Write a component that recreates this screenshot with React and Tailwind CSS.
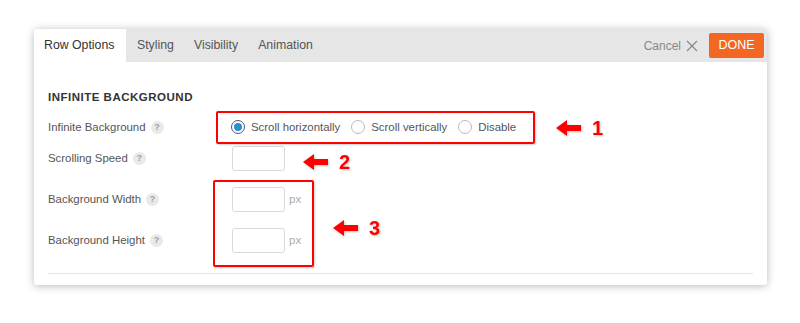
import React from "react";

const HelpIcon = () => (
  <span className="ml-[5px] inline-flex h-[13px] w-[13px] items-center justify-center rounded-full bg-[#e9e9e9] text-[9px] font-bold leading-none text-[#a0a0a0]">
    ?
  </span>
);

const Radio = ({ checked, label }) => (
  <label className="flex items-center gap-[6px]">
    <span
      className={`flex h-[14px] w-[14px] items-center justify-center rounded-full border ${
        checked ? "border-[#555]" : "border-[#bbb]"
      } bg-white`}
    >
      {checked && <span className="h-[8px] w-[8px] rounded-full bg-[#2b8fd6]" />}
    </span>
    <span>{label}</span>
  </label>
);

const Arrow = ({ num }) => (
  <div className="flex items-center gap-[11px] drop-shadow-[1px_1px_1px_rgba(0,0,0,0.25)]">
    <svg width="25" height="16" viewBox="0 0 25 16">
      <path d="M0 8 L11 0 L11 5 L25 5 L25 11 L11 11 L11 16 Z" fill="#f00" />
    </svg>
    <span className="text-[20px] font-bold leading-none text-[#f00]">{num}</span>
  </div>
);

const Field = ({ suffix }) => (
  <div className="flex items-center">
    <div className="h-[25px] w-[53px] rounded-[3px] border border-[#d9d9d9] bg-white" />
    {suffix && <span className="ml-[4px] text-[11.5px] text-[#aaa]">{suffix}</span>}
  </div>
);

const Label = ({ children }) => (
  <div className="flex w-[184px] items-center text-[11.4px] text-[#555]">
    {children}
    <HelpIcon />
  </div>
);

export default function App() {
  return (
    <div className="relative h-[323px] w-[800px] bg-white font-['Liberation_Sans',Arial,sans-serif]">
      <div className="absolute left-[34px] top-[29px] h-[256px] w-[733px] overflow-hidden rounded-[3px] bg-white shadow-[0_1px_8px_rgba(0,0,0,0.28)]">
        {/* header tabs */}
        <div className="flex h-[33px] items-stretch bg-[#e6e6e6] text-[12.3px] text-[#555]">
          <div className="flex w-[92px] items-center bg-white pl-[10px] text-[#333]">Row Options</div>
          <div className="flex items-center pl-[11px] pr-[10px]">Styling</div>
          <div className="flex items-center pl-[10px] pr-[10px]">Visibility</div>
          <div className="flex items-center pl-[10px]">Animation</div>
          <div className="ml-auto flex items-center pr-[3px]">
            <span className="text-[12px] text-[#888]">Cancel</span>
            <svg className="ml-[5px]" width="12" height="12" viewBox="0 0 12 12">
              <path d="M1 1 L11 11 M11 1 L1 11" stroke="#888" strokeWidth="1.2" />
            </svg>
            <button className="ml-[11px] h-[25px] w-[55px] rounded-[2px] bg-[#f26722] text-[12.5px] text-white">
              DONE
            </button>
          </div>
        </div>

        {/* body */}
        <div className="px-[14px]">
          <div className="mt-[27px] text-[11.5px] font-bold tracking-[0.5px] text-[#333]">INFINITE BACKGROUND</div>

          <div className="mt-[12px] flex h-[18px] items-center">
            <Label>Infinite Background</Label>
            <div className="-ml-[1px] flex items-center gap-[11px] text-[11.4px] text-[#555]">
              <Radio checked label="Scroll horizontally" />
              <Radio label="Scroll vertically" />
              <Radio label="Disable" />
            </div>
          </div>

          <div className="mt-[10px] flex h-[25px] items-center">
            <Label>Scrolling Speed</Label>
            <Field />
          </div>

          <div className="mt-[16px] flex h-[25px] items-center">
            <Label>Background Width</Label>
            <Field suffix="px" />
          </div>

          <div className="mt-[16px] flex h-[25px] items-center">
            <Label>Background Height</Label>
            <Field suffix="px" />
          </div>

          <div className="mt-[20px] h-px bg-[#e5e5e5]" />
        </div>
      </div>

      {/* annotations */}
      <div className="absolute left-[216px] top-[111px] h-[33px] w-[319px] rounded-[2px] border-2 border-[#f00] shadow-[1px_1px_2px_rgba(0,0,0,0.2)]" />
      <div className="absolute left-[213px] top-[180px] h-[87px] w-[101px] rounded-[2px] border-2 border-[#f00] shadow-[1px_1px_2px_rgba(0,0,0,0.2)]" />
      <div className="absolute left-[556px] top-[118px]">
        <Arrow num="1" />
      </div>
      <div className="absolute left-[303px] top-[152px]">
        <Arrow num="2" />
      </div>
      <div className="absolute left-[333px] top-[218px]">
        <Arrow num="3" />
      </div>
    </div>
  );
}
